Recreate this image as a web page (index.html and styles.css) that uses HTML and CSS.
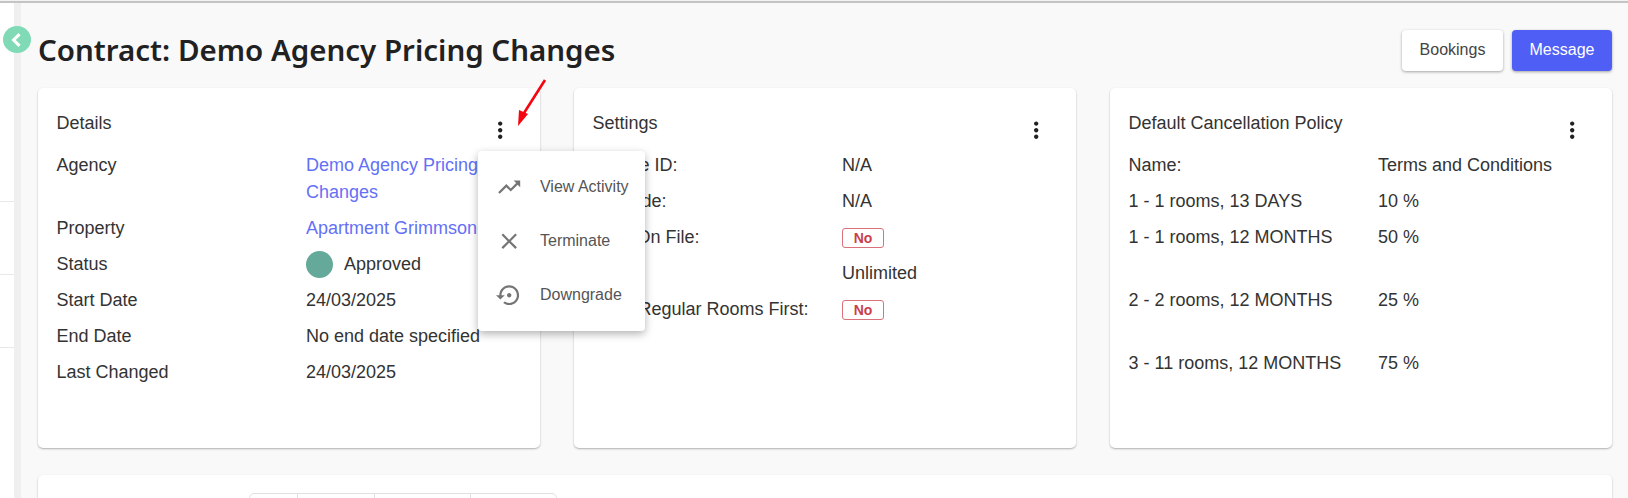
FILE: index.html
```html
<!DOCTYPE html>
<html lang="en">
<head>
  <meta charset="UTF-8" />
  <title>Contract: Demo Agency Pricing Changes</title>
  <link rel="stylesheet" href="styles.css">
</head>
<body>
  <div class="top-line"></div>
  <div class="shell">
    <aside class="sidebar">
      <div class="side-item side-first"></div>
      <div class="side-item"></div>
      <div class="side-item"></div>
    </aside>
    <div class="side-strip"></div>

    <main class="main">
      <header class="page-head">
        <h1>Contract: Demo Agency Pricing Changes</h1>
        <div class="head-buttons">
          <button class="btn">Bookings</button>
          <button class="btn btn-primary">Message</button>
        </div>
      </header>

      <section class="cards">
        <div class="card">
          <div class="card-head">
            <span>Details</span>
            <svg class="kebab" viewBox="0 0 24 24"><path d="M12 8c1.1 0 2-.9 2-2s-.9-2-2-2-2 .9-2 2 .9 2 2 2zm0 2c-1.1 0-2 .9-2 2s.9 2 2 2 2-.9 2-2-.9-2-2-2zm0 6c-1.1 0-2 .9-2 2s.9 2 2 2 2-.9 2-2-.9-2-2-2z"/></svg>
          </div>
          <div class="rows">
            <div>Agency</div>
            <div><a href="#">Demo Agency Pricing Changes</a></div>
            <div>Property</div>
            <div><a href="#">Apartment Grimmson</a></div>
            <div>Status</div>
            <div class="status"><span class="status-dot"></span>Approved</div>
            <div>Start Date</div>
            <div>24/03/2025</div>
            <div>End Date</div>
            <div>No end date specified</div>
            <div>Last Changed</div>
            <div>24/03/2025</div>
          </div>

          <!-- Open menu -->
          <div class="menu">
            <div class="menu-item">
              <svg viewBox="0 0 24 24"><path d="M16 6l2.29 2.29-4.88 4.88-4-4L2 16.59 3.41 18l6-6 4 4 6.3-6.29L22 12V6z"/></svg>
              <span>View Activity</span>
            </div>
            <div class="menu-item">
              <svg viewBox="0 0 24 24"><path d="M19 6.41 17.59 5 12 10.59 6.41 5 5 6.41 10.59 12 5 17.59 6.41 19 12 13.41 17.59 19 19 17.59 13.41 12z"/></svg>
              <span>Terminate</span>
            </div>
            <div class="menu-item">
              <svg viewBox="0 0 24 24"><path d="M14 12c0-1.1-.9-2-2-2s-2 .9-2 2 .9 2 2 2 2-.9 2-2zm-2-9c-4.97 0-9 4.03-9 9H0l4 4 4-4H5c0-3.87 3.13-7 7-7s7 3.13 7 7-3.13 7-7 7c-1.51 0-2.91-.49-4.06-1.3l-1.42 1.44C8.04 20.3 9.94 21 12 21c4.97 0 9-4.03 9-9s-4.03-9-9-9z"/></svg>
              <span>Downgrade</span>
            </div>
          </div>
        </div>

        <div class="card">
          <div class="card-head">
            <span>Settings</span>
            <svg class="kebab" viewBox="0 0 24 24"><path d="M12 8c1.1 0 2-.9 2-2s-.9-2-2-2-2 .9-2 2 .9 2 2 2zm0 2c-1.1 0-2 .9-2 2s.9 2 2 2 2-.9 2-2-.9-2-2-2zm0 6c-1.1 0-2 .9-2 2s.9 2 2 2 2-.9 2-2-.9-2-2-2z"/></svg>
          </div>
          <div class="rows">
            <div>Source ID:</div>
            <div>N/A</div>
            <div>Upgrade:</div>
            <div>N/A</div>
            <div>Card On File:</div>
            <div><span class="badge-no">No</span></div>
            <div>Limit:</div>
            <div>Unlimited</div>
            <div>Book Regular Rooms First:</div>
            <div><span class="badge-no">No</span></div>
          </div>
        </div>

        <div class="card">
          <div class="card-head">
            <span>Default Cancellation Policy</span>
            <svg class="kebab" viewBox="0 0 24 24"><path d="M12 8c1.1 0 2-.9 2-2s-.9-2-2-2-2 .9-2 2 .9 2 2 2zm0 2c-1.1 0-2 .9-2 2s.9 2 2 2 2-.9 2-2-.9-2-2-2zm0 6c-1.1 0-2 .9-2 2s.9 2 2 2 2-.9 2-2-.9-2-2-2z"/></svg>
          </div>
          <div class="rows">
            <div>Name:</div>
            <div>Terms and Conditions</div>
            <div>1 - 1 rooms, 13 DAYS</div>
            <div>10 %</div>
            <div class="tall">1 - 1 rooms, 12 MONTHS</div>
            <div>50 %</div>
            <div class="tall">2 - 2 rooms, 12 MONTHS</div>
            <div>25 %</div>
            <div>3 - 11 rooms, 12 MONTHS</div>
            <div>75 %</div>
          </div>
        </div>
      </section>

      <section class="card card-wide">
        <div class="tabs">
          <div class="tab tab-1"></div>
          <div class="tab tab-2"></div>
          <div class="tab tab-3"></div>
          <div class="tab tab-4"></div>
        </div>
      </section>
    </main>
  </div>

  <!-- Collapse button sits over the sidebar edge -->
  <div class="collapse-btn">
    <svg viewBox="0 0 24 24"><path d="M15 5 8 12l7 7" /></svg>
  </div>

  <!-- Annotation arrow from the screenshot -->
  <svg class="arrow" width="40" height="60" viewBox="0 0 40 60">
    <line x1="33" y1="3" x2="12" y2="36" />
    <polygon points="6,49 7,33 16,37" />
  </svg>
</body>
</html>
```

FILE: styles.css
```css
html, body {
  margin: 0;
  height: 498px;
  overflow: hidden;
}

body {
  font-family: "Liberation Sans", Arial, sans-serif;
  font-size: 18px;
  line-height: 27px;
  color: #333;
  background: #f9f9f9;
  position: relative;
}

.top-line {
  height: 3px;
  background: #c4c4c4;
  border-top: 1px solid #f2f2f2;
  box-sizing: border-box;
}

.shell {
  display: flex;
  height: 495px;
  overflow: hidden;
}

/* Sidebar */
.sidebar {
  width: 14px;
  background: #fff;
  flex-shrink: 0;
}

.side-item {
  height: 73px;
  box-sizing: border-box;
  border-bottom: 1px solid #e8e8e8;
}

.side-first {
  height: 199px;
}

.side-strip {
  width: 7px;
  background: #efefef;
  flex-shrink: 0;
}

.main {
  flex: 1;
  min-width: 0;
  padding: 0 16px 0 17px;
}

/* Header */
.page-head {
  display: flex;
  justify-content: space-between;
  align-items: center;
  height: 85px;
  padding-top: 9px;
  box-sizing: border-box;
}

h1 {
  margin: 0;
  font-family: "Noto Sans", sans-serif;
  font-size: 29.5px;
  font-weight: 600;
  line-height: 40px;
  color: #212121;
}

.head-buttons {
  display: flex;
  gap: 9px;
}

.btn {
  height: 41px;
  width: 101px;
  padding: 0;
  font-family: inherit;
  font-size: 16px;
  color: #444;
  background: #fff;
  border: none;
  border-radius: 4px;
  box-shadow: 0 1px 3px rgba(0,0,0,0.35);
}

.btn-primary {
  width: 100px;
  color: #fff;
  background: #4f5ef5;
}

/* Cards */
.cards {
  display: grid;
  grid-template-columns: repeat(3, 502px);
  gap: 34px;
}

.card {
  position: relative;
  height: 360px;
  padding: 22px 27px 0 18.5px;
  box-sizing: border-box;
  background: #fff;
  border-radius: 5px;
  box-shadow: 0 1px 2px rgba(0,0,0,0.3);
}

.card-head {
  display: flex;
  justify-content: space-between;
  align-items: flex-start;
  height: 42px;
}

.kebab {
  width: 26.4px;
  height: 26.4px;
  margin-top: 7px;
  fill: #222;
}

.rows {
  display: grid;
  grid-template-columns: 249.5px 1fr;
  row-gap: 9px;
}

.tall {
  padding-bottom: 27px;
}

a {
  color: #6470f5;
  text-decoration: none;
}

.status {
  display: flex;
  align-items: center;
  gap: 11px;
}

.status-dot {
  width: 27px;
  height: 27px;
  border-radius: 50%;
  background: #64a99a;
}

.badge-no {
  display: inline-block;
  width: 42px;
  height: 20px;
  box-sizing: border-box;
  vertical-align: middle;
  text-align: center;
  font-size: 14px;
  font-weight: bold;
  line-height: 18px;
  color: #c9404c;
  border: 1px solid #d9727a;
  border-radius: 3px;
}

/* Dropdown menu */
.menu {
  position: absolute;
  top: 63px;
  left: 440px;
  z-index: 5;
  width: 167px;
  padding: 9px 0;
  background: #fff;
  border-radius: 4px;
  box-shadow: 0 3px 8px rgba(0,0,0,0.3);
}

.menu-item {
  display: flex;
  align-items: center;
  height: 54px;
  padding-left: 18px;
  font-size: 16px;
  color: #555;
}

.menu-item svg {
  width: 26.4px;
  height: 26.4px;
  margin-right: 17.6px;
  fill: #757575;
  flex-shrink: 0;
}

.menu-item span {
  margin-top: -2px;
}

/* Bottom card, cut off by the window */
.card-wide {
  width: 1574px;
  margin-top: 27px;
  padding-top: 18px;
}

.tabs {
  display: flex;
  width: 308px;
  height: 40px;
  margin-left: 192.5px;
  border: 1px solid #e0e0e0;
  border-radius: 5px;
  box-sizing: border-box;
}

.tab {
  border-right: 1px solid #e0e0e0;
}

.tab-1 { width: 47px; }
.tab-2 { width: 76px; }
.tab-3 { width: 95px; }
.tab-4 { flex: 1; border-right: none; }

/* Overlays */
.collapse-btn {
  position: absolute;
  top: 26px;
  left: 3px;
  width: 28px;
  height: 27px;
  border-radius: 50%;
  background: #7fdab5;
  display: flex;
  align-items: center;
  justify-content: center;
}

.collapse-btn svg {
  width: 20px;
  height: 20px;
  fill: none;
  stroke: #fff;
  stroke-width: 3.8;
}

.arrow {
  position: absolute;
  top: 77px;
  left: 512px;
  z-index: 6;
}

.arrow line {
  stroke: #f5050f;
  stroke-width: 2.6;
}

.arrow polygon {
  fill: #f5050f;
}
```
